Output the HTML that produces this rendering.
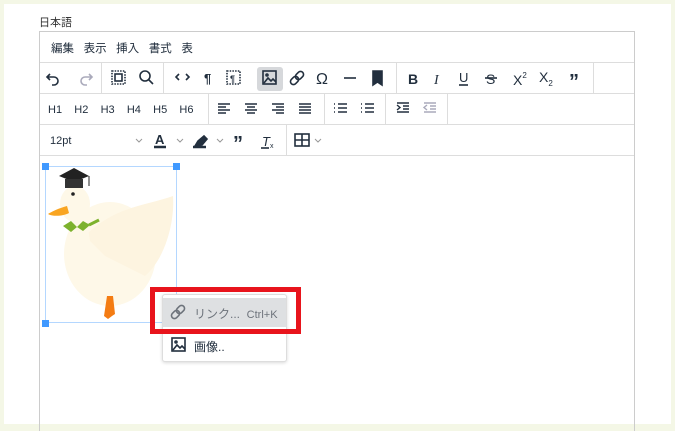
<!DOCTYPE html>
<html><head><meta charset="utf-8"><style>
*{margin:0;padding:0;box-sizing:border-box}
body{width:675px;height:429px;background:#f4f7e6;position:relative;overflow:hidden;font-family:"Liberation Sans","Noto Sans CJK JP",sans-serif;color:#222f3e}
.panel{position:absolute;left:4px;top:4px;width:667px;height:420px;background:#fff}
.lbl{position:absolute;left:39px;top:14px;font-size:11px;color:#333}
.ed{position:absolute;left:39px;top:31px;width:596px;height:400px;border:1px solid #ccc;border-bottom:none}
.row{position:absolute;left:0;width:594px;border-bottom:1px solid #ddd}
.t{position:absolute;font-size:12px;color:#222f3e;white-space:nowrap}
.s{position:absolute;width:1px;background:#ddd}
svg{position:absolute;overflow:visible}
</style></head><body>
<div class="panel"></div>
<div class="lbl">日本語</div>
<div class="ed">
<div class="row" style="top:0;height:31px"></div>
<div class="row" style="top:31px;height:31px"></div>
<div class="row" style="top:62px;height:31px"></div>
<div class="row" style="top:93px;height:31px"></div>
<div class="t" style="left:11px;top:8px;font-size:11.5px">編集&nbsp;&nbsp;&nbsp;表示&nbsp;&nbsp;&nbsp;挿入&nbsp;&nbsp;&nbsp;書式&nbsp;&nbsp;&nbsp;表</div>
<div class="s" style="left:61px;top:31px;height:31px"></div>
<div class="s" style="left:123px;top:31px;height:31px"></div>
<div class="s" style="left:356px;top:31px;height:31px"></div>
<div class="s" style="left:553px;top:31px;height:31px"></div>
<div class="s" style="left:168px;top:62px;height:31px"></div>
<div class="s" style="left:284px;top:62px;height:31px"></div>
<div class="s" style="left:345px;top:62px;height:31px"></div>
<div class="s" style="left:407px;top:62px;height:31px"></div>
<div class="s" style="left:246px;top:93px;height:31px"></div>
<div style="position:absolute;left:217px;top:35px;width:26px;height:24px;background:#d6d8db;border-radius:3px"></div>
<div class="t" style="left:8px;top:72px;font-size:11px">H1&nbsp;&nbsp;&nbsp;&nbsp;H2&nbsp;&nbsp;&nbsp;&nbsp;H3&nbsp;&nbsp;&nbsp;&nbsp;H4&nbsp;&nbsp;&nbsp;&nbsp;H5&nbsp;&nbsp;&nbsp;&nbsp;H6</div>
<div class="t" style="left:10px;top:103px;font-size:11px">12pt</div>
</div>
<svg width="675" height="429" style="left:0;top:0" fill="none" stroke="#222f3e" stroke-width="1.6">
<path d="M50 74l-3 3 3 3M47 77h7a4 4 0 010 8h-2"/>
<path d="M89 74l3 3-3 3M92 77h-7a4 4 0 000 8h2" stroke="#aab"/>
<rect x="112" y="71" width="13" height="13" stroke-dasharray="1.5 1.2"/><rect x="115" y="74" width="7" height="7"/>
<circle cx="145" cy="76" r="5"/><path d="M149 80l4 4"/>
<path d="M179 74l-3 3 3 3M186 74l3 3-3 3"/>
<text x="204" y="83" font-size="13" font-weight="bold" fill="#222f3e" stroke="none">¶</text>
<rect x="227" y="71" width="13" height="13" stroke-dasharray="1.5 1.2"/><text x="230" y="82" font-size="9" font-weight="bold" fill="#222f3e" stroke="none">¶</text>
<rect x="263" y="71" width="13" height="13"/><path d="M264 83l4-5 3 3 2-2 3 3"/><circle cx="267" cy="75" r="1"/>
<g transform="rotate(-45 297 78)"><rect x="289" y="75" width="9" height="6" rx="3"/><rect x="296" y="75" width="9" height="6" rx="3"/></g>
<text x="316" y="84" font-size="16" fill="#222f3e" stroke="none">Ω</text>
<path d="M344 78h12"/>
<path d="M373 71h9v14l-4.5-3-4.5 3z" fill="#222f3e"/>
<text x="408" y="84" font-size="14" font-weight="bold" fill="#222f3e" stroke="none">B</text>
<text x="434" y="84" font-size="14" font-style="italic" font-family="Liberation Serif" fill="#222f3e" stroke="none">I</text>
<text x="459" y="82" font-size="13" fill="#222f3e" stroke="none">U</text><path d="M459 85h9"/>
<text x="486" y="84" font-size="14" fill="#222f3e" stroke="none">S</text><path d="M485 78h12"/>
<text x="513" y="85" font-size="14" fill="#222f3e" stroke="none">X<tspan font-size="8" dy="-7">2</tspan></text>
<text x="539" y="82" font-size="14" fill="#222f3e" stroke="none">X<tspan font-size="8" dy="4">2</tspan></text>
<text x="569" y="88" font-size="20" font-weight="bold" fill="#222f3e" stroke="none">”</text>
<g stroke-width="1.4"><path d="M218 104h12M218 107h8M218 110h12M218 113h8"/>
<path d="M245 104h12M247 107h8M245 110h12M247 113h8"/>
<path d="M272 104h12M276 107h8M272 110h12M276 113h8"/>
<path d="M299 104h12M299 107h12M299 110h12M299 113h12"/>
<path d="M334 104h1M334 108h1M334 112h1M338 104h9M338 108h9M338 112h9"/>
<path d="M361 104h1M361 108h1M361 112h1M365 104h9M365 108h9M365 112h9"/>
<path d="M397 103h12M403 106h6M403 109h6M397 112h12M397 105l3 2.5-3 2.5"/>
<path d="M424 103h12M430 106h6M430 109h6M424 112h12M427 105l-3 2.5 3 2.5" stroke="#aab"/>
<path d="M136 139l3 3 3-3M177 139l3 3 3-3M217 139l3 3 3-3M315 139l3 3 3-3" stroke="#999" stroke-width="1"/>
</g>
<text x="155" y="144" font-size="13" font-weight="bold" fill="#222f3e" stroke="none">A</text><path d="M154 147h12" stroke-width="2.5"/>
<path d="M195 146l3-5 6-5 3 3-5 6z" fill="#222f3e"/><path d="M193 147h13" stroke-width="2.5"/>
<text x="233" y="150" font-size="20" font-weight="bold" fill="#222f3e" stroke="none">”</text>
<text x="262" y="146" font-size="13" font-style="italic" fill="#222f3e" stroke="none">T</text><text x="270" y="148" font-size="7" fill="#222f3e" stroke="none">x</text><path d="M261 148h8"/>
<rect x="295" y="134" width="14" height="12"/><path d="M295 140h14M302 134v12"/>
</svg>
<svg width="131" height="157" style="left:45px;top:166px">
<ellipse cx="65" cy="88" rx="46" ry="52" fill="#fef8e8"/>
<path d="M40 70 C70 40 100 40 128 30 C130 60 118 95 100 110 L60 90z" fill="#fdf4e0"/>
<ellipse cx="30" cy="38" rx="15" ry="18" fill="#fef8e8"/>
<path d="M30 70 L25 45 L40 45 L45 75z" fill="#fef8e8"/>
<path d="M62 130l-3 20 4 3 4-3 3-2-2-18z" fill="#f47c13"/>
<path d="M22 40c-8 2-16 6-19 8 5 3 16 2 21-1z" fill="#f9a521"/>
<circle cx="28" cy="28" r="1.8" fill="#222"/>
<path d="M18 60l8-5 6 6-6 5zM32 61l6-6 7 4-7 6z" fill="#7db22e"/><path d="M44 59l10-5" stroke="#7db22e" stroke-width="3"/>
<path d="M14 10l15-8 15 8-15 6z" fill="#222"/><path d="M20 13v9h18v-9" fill="#333"/><path d="M44 10v10" stroke="#222"/>
</svg>
<div style="position:absolute;left:45px;top:166px;width:132px;height:157px;border:1px solid #b4d7ff"></div>
<div style="position:absolute;left:42px;top:163px;width:7px;height:7px;background:#4099ff"></div>
<div style="position:absolute;left:173px;top:163px;width:7px;height:7px;background:#4099ff"></div>
<div style="position:absolute;left:42px;top:320px;width:7px;height:7px;background:#4099ff"></div>
<div style="position:absolute;left:162px;top:294px;width:125px;height:68px;background:#fff;border:1px solid #ddd;border-radius:3px;box-shadow:0 1px 3px rgba(0,0,0,.15)"></div>
<div style="position:absolute;left:163px;top:298px;width:123px;height:29px;background:#dee0e2"></div>
<div class="t" style="left:194px;top:305px;font-size:12px;color:#6d737b">リンク...&nbsp;&nbsp;<span style="font-size:11px">Ctrl+K</span></div>
<div class="t" style="left:194px;top:338px;font-size:12px">画像..</div>
<svg width="675" height="429" style="left:0;top:0" fill="none" stroke-width="1.6">
<g transform="rotate(-45 178 312)" stroke="#6d737b"><rect x="170" y="309" width="9" height="6" rx="3"/><rect x="177" y="309" width="9" height="6" rx="3"/></g>
<rect x="172" y="338" width="13" height="13" stroke="#222f3e"/><path d="M173 350l4-5 3 3 2-2 3 3" stroke="#222f3e"/><circle cx="176" cy="342" r="1" stroke="#222f3e"/>
</svg>
<div style="position:absolute;left:150px;top:287px;width:151px;height:47px;border:5px solid #e8141c"></div>
</body></html>
